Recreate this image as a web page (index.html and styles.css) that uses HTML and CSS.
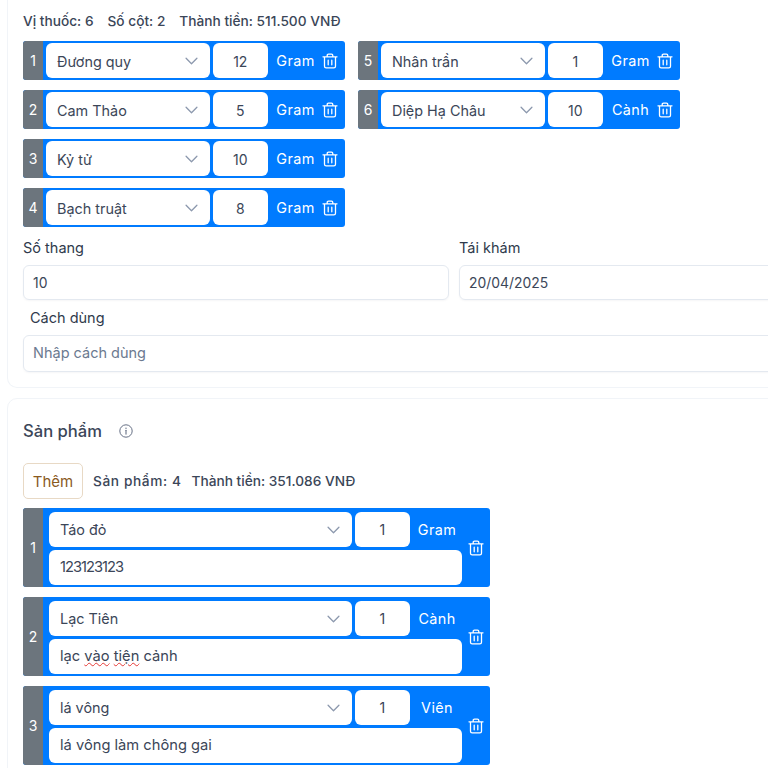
FILE: index.html
```html
<!DOCTYPE html>
<html lang="en">
<head>
  <meta charset="UTF-8">
  <title>Kê đơn</title>
  <meta name="viewport" content="width=device-width, initial-scale=1.0">
  <link rel="stylesheet" href="styles.css">
</head>
<body>
  <svg class="defs" width="0" height="0">
    <symbol id="trash" viewBox="0 0 16 16">
      <path d="M1 3.8h14M5.2 3.6V2.4c0-.8.5-1.3 1.3-1.3h3c.8 0 1.3.5 1.3 1.3v1.2M2.5 3.8v9.4c0 1 .7 1.7 1.7 1.7h7.6c1 0 1.7-.7 1.7-1.7V3.8M6.2 7.2v4.6M9.8 7.2v4.6" fill="none" stroke="currentColor" stroke-width="1.3" stroke-linecap="round" stroke-linejoin="round"/>
    </symbol>
    <symbol id="chevron" viewBox="0 0 12 7">
      <path d="M1 1l5 5 5-5" fill="none" stroke="currentColor" stroke-width="1.2" stroke-linecap="round" stroke-linejoin="round"/>
    </symbol>
  </svg>

  <div class="page">
    <section class="card card-top">
      <div class="stats">
        <span>Vị thuốc: 6</span>
        <span>Số cột: 2</span>
        <span>Thành tiền: 511.500 VNĐ</span>
      </div>

      <div class="herb-columns">
        <div class="herb-col">
          <div class="herb-row">
            <div class="idx">1</div>
            <div class="select herb-select">Đương quy<svg class="chevron"><use href="#chevron"/></svg></div>
            <div class="qty">12</div>
            <div class="unit">Gram</div>
            <svg class="trash"><use href="#trash"/></svg>
          </div>
          <div class="herb-row">
            <div class="idx">2</div>
            <div class="select herb-select">Cam Thảo<svg class="chevron"><use href="#chevron"/></svg></div>
            <div class="qty">5</div>
            <div class="unit">Gram</div>
            <svg class="trash"><use href="#trash"/></svg>
          </div>
          <div class="herb-row">
            <div class="idx">3</div>
            <div class="select herb-select">Kỷ tử<svg class="chevron"><use href="#chevron"/></svg></div>
            <div class="qty">10</div>
            <div class="unit">Gram</div>
            <svg class="trash"><use href="#trash"/></svg>
          </div>
          <div class="herb-row">
            <div class="idx">4</div>
            <div class="select herb-select">Bạch truật<svg class="chevron"><use href="#chevron"/></svg></div>
            <div class="qty">8</div>
            <div class="unit">Gram</div>
            <svg class="trash"><use href="#trash"/></svg>
          </div>
        </div>

        <div class="herb-col">
          <div class="herb-row">
            <div class="idx">5</div>
            <div class="select herb-select">Nhân trần<svg class="chevron"><use href="#chevron"/></svg></div>
            <div class="qty">1</div>
            <div class="unit">Gram</div>
            <svg class="trash"><use href="#trash"/></svg>
          </div>
          <div class="herb-row">
            <div class="idx">6</div>
            <div class="select herb-select">Diệp Hạ Châu<svg class="chevron"><use href="#chevron"/></svg></div>
            <div class="qty">10</div>
            <div class="unit">Cành</div>
            <svg class="trash"><use href="#trash"/></svg>
          </div>
        </div>
      </div>

      <div class="form-grid">
        <div class="field">
          <label>Số thang</label>
          <div class="input">10</div>
        </div>
        <div class="field">
          <label>Tái khám</label>
          <div class="input">20/04/2025</div>
        </div>
      </div>
      <div class="field field-usage">
        <label>Cách dùng</label>
        <div class="input input-tall placeholder">Nhập cách dùng</div>
      </div>
    </section>

    <section class="card card-products">
      <div class="card-title">
        <h2>Sản phẩm</h2>
        <svg class="info" viewBox="0 0 14 14">
          <circle cx="7" cy="7" r="6.2" fill="none" stroke="currentColor" stroke-width="1"/>
          <path d="M7 6.2v3.9" fill="none" stroke="currentColor" stroke-width="1.1" stroke-linecap="round"/>
          <circle cx="7" cy="4.2" r=".7" fill="currentColor"/>
        </svg>
      </div>

      <div class="toolbar">
        <button class="btn-add">Thêm</button>
        <span class="count">Sản phẩm: 4</span>
        <span>Thành tiền: 351.086 VNĐ</span>
      </div>

      <div class="product-list">
        <div class="product-row">
          <div class="idx">1</div>
          <div class="product-body">
            <div class="product-line">
              <div class="select product-select">Táo đỏ<svg class="chevron"><use href="#chevron"/></svg></div>
              <div class="qty">1</div>
              <div class="unit">Gram</div>
            </div>
            <div class="note note-digits">123123123</div>
          </div>
          <svg class="trash"><use href="#trash"/></svg>
        </div>
        <div class="product-row">
          <div class="idx">2</div>
          <div class="product-body">
            <div class="product-line">
              <div class="select product-select">Lạc Tiên<svg class="chevron"><use href="#chevron"/></svg></div>
              <div class="qty">1</div>
              <div class="unit">Cành</div>
            </div>
            <div class="note">lạc <span class="spell">vào</span> <span class="spell">tiện</span> cảnh</div>
          </div>
          <svg class="trash"><use href="#trash"/></svg>
        </div>
        <div class="product-row">
          <div class="idx">3</div>
          <div class="product-body">
            <div class="product-line">
              <div class="select product-select">lá vông<svg class="chevron"><use href="#chevron"/></svg></div>
              <div class="qty">1</div>
              <div class="unit">Viên</div>
            </div>
            <div class="note">lá vông làm chông gai</div>
          </div>
          <svg class="trash"><use href="#trash"/></svg>
        </div>
      </div>
    </section>
  </div>
</body>
</html>
```

FILE: styles.css
```css
* { margin: 0; padding: 0; box-sizing: border-box; }
html, body { height: 768px; overflow: hidden; }
body { font-family: Inter, 'Noto Sans', sans-serif; font-size: 14px; background: #fff; color: #3b4658; }
.defs { position: absolute; }
.page { width: 860px; padding-left: 7px; }

.card { border: 1px solid #f1f4f8; border-radius: 10px; padding: 0 15px; background: #fff; }
.card-top { border-top: none; border-radius: 0 0 10px 10px; height: 388px; padding-top: 12px; }
.card-products { margin-top: 10px; height: 400px; }

/* Stats line */
.stats { display: flex; gap: 14px; height: 19px; line-height: 19px; font-size: 13.7px; font-weight: 500; margin-bottom: 10px; }

/* Herb rows */
.herb-columns { display: flex; gap: 13px; height: 187px; }
.herb-col { display: flex; flex-direction: column; gap: 10px; width: 322px; }
.herb-row { display: flex; align-items: center; height: 39px; background: #007bff; border-radius: 3px; overflow: hidden; }
.idx { align-self: stretch; width: 20px; flex: none; display: flex; align-items: center; justify-content: center; background: #6c757d; color: #fff; font-size: 14px; }
.select { display: flex; align-items: center; justify-content: space-between; height: 35px; background: #fff; border-radius: 6px; padding: 0 11px; font-size: 14.4px; }
.herb-select { width: 164px; margin-left: 3px; padding-top: 1px; }
.chevron { width: 13px; height: 8px; color: #8d99ae; margin-right: 1px; }
.qty { width: 55.5px; height: 35px; margin-left: 2.5px; flex: none; display: flex; align-items: center; justify-content: center; background: #fff; border-radius: 6px; font-size: 14px; }
.herb-row .qty { padding-top: 1px; }
.unit { width: 55px; flex: none; text-align: center; color: #fff; font-size: 14.4px; letter-spacing: 0.4px; }
.trash { width: 16px; height: 16px; color: #fff; flex: none; }
.herb-row .trash { margin-left: -1px; }

/* Form */
.form-grid { display: grid; grid-template-columns: 426px 1fr; gap: 10px; margin-top: 10px; }
.field label { display: block; height: 27px; line-height: 20px; font-size: 14.5px; color: #2f3a4c; }
.input { height: 35px; line-height: 34px; border: 1px solid #e4e9f0; border-radius: 6px; padding: 0 9px; font-size: 13.9px; box-shadow: 0 1px 2px rgba(16,24,40,0.04); }
.input-tall { height: 37px; line-height: 34px; font-size: 14.5px; }
.placeholder { color: #6b7a90; }
.field-usage { margin-top: 8px; }
.field-usage label { padding-left: 7px; }

/* Products */
.card-title { display: flex; align-items: center; gap: 17px; height: 64px; }
.card-title h2 { font-size: 16.6px; font-weight: 500; color: #3b4658; }
.info { width: 14px; height: 14px; color: #667085; }
.toolbar { display: flex; align-items: center; gap: 10px; height: 36px; font-size: 13.7px; font-weight: 500; }
.count { letter-spacing: 0.6px; }
.btn-add { width: 60px; height: 36px; background: #fff; border: 1px solid #e8d9c5; border-radius: 5px; color: #8a5a1e; font: inherit; font-weight: 400; font-size: 15px; }
.product-list { display: flex; flex-direction: column; gap: 10px; margin-top: 9px; }
.product-row { display: flex; align-items: center; width: 467px; height: 79px; background: #007bff; border-radius: 3px; overflow: hidden; }
.product-body { width: 413px; margin-left: 6px; padding-top: 2px; }
.product-line { display: flex; align-items: center; width: 415px; }
.product-select { width: 303px; flex: none; }
.product-line .unit { flex: 1; }
.note { height: 35px; line-height: 35px; margin-top: 3px; background: #fff; border-radius: 6px; padding: 0 11px; font-size: 14.7px; }
.note-digits { letter-spacing: -1px; }
.spell { text-decoration: underline wavy #e53935; text-decoration-thickness: 1px; }
.product-row .trash { margin-left: 6px; }
```
